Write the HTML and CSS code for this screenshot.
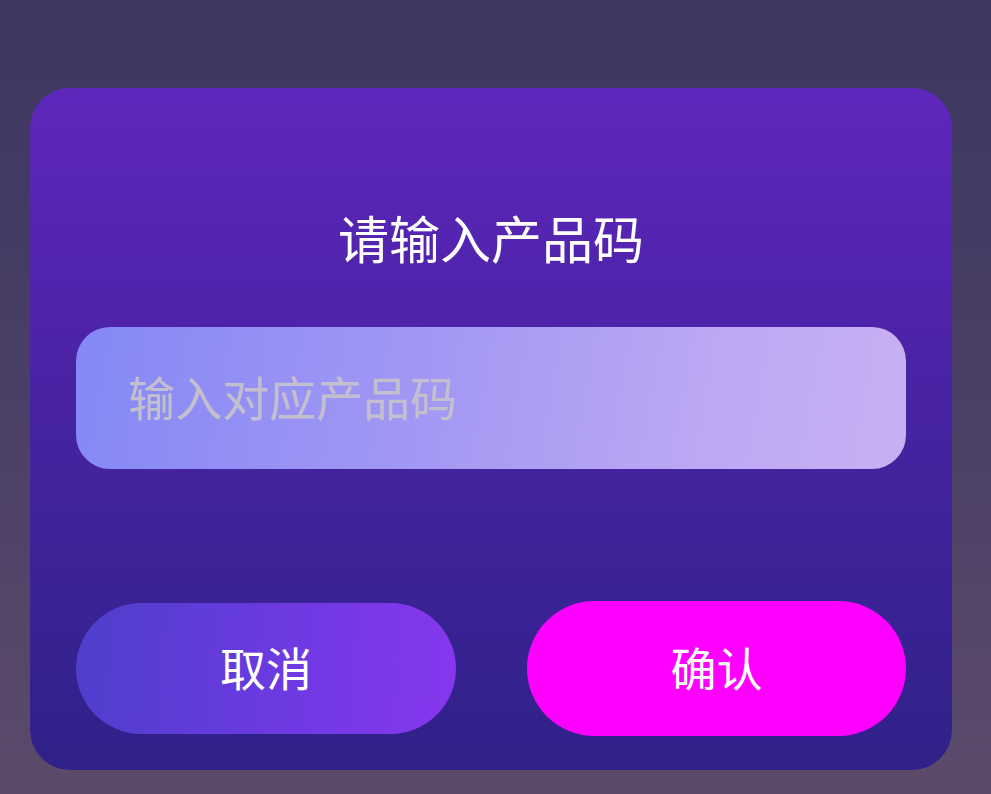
FILE: index.html
```html
<!DOCTYPE html>
<html lang="zh-CN">
<head>
<meta charset="utf-8">
<title>请输入产品码</title>
<link rel="stylesheet" href="styles.css">
</head>
<body>
<div class="screen">
  <div class="dialog">
    <h1 class="title">请输入产品码</h1>
    <div class="field"><input class="input" type="text" placeholder="输入对应产品码"></div>
    <div class="actions">
      <button class="btn btn-cancel">取消</button>
      <button class="btn btn-confirm">确认</button>
    </div>
  </div>
</div>
</body>
</html>
```
FILE: styles.css
```css
html, body {
  margin: 0;
  padding: 0;
  height: 100%;
}
body {
  font-family: "Noto Sans CJK SC", "Noto Sans", sans-serif;
  background: linear-gradient(180deg, #3c3761 0%, #4a3f66 50%, #5d4a6b 100%);
  overflow: hidden;
}
.screen {
  width: 991px;
  height: 794px;
  padding: 88px 39px 0 30px;
  box-sizing: border-box;
}
.dialog {
  width: 922px;
  height: 682px;
  box-sizing: border-box;
  border-radius: 40px;
  background: linear-gradient(180deg, #5f27bc 0%, #4a23a6 40%, #2f2188 100%);
  padding: 114px 46px 34px 46px;
  display: flex;
  flex-direction: column;
}
.title {
  margin: 0;
  height: 70px;
  line-height: 70px;
  text-align: center;
  color: #ffffff;
  font-size: 51px;
  font-weight: 400;
  letter-spacing: 0;
}
.field {
  margin-top: 55px;
  height: 142px;
}
.input {
  width: 100%;
  height: 100%;
  box-sizing: border-box;
  border: none;
  outline: none;
  border-radius: 34px;
  background: linear-gradient(100deg, #8488f6 0%, #a499f3 45%, #bca8f4 75%, #c8b0f2 100%);
  padding: 0 0 6px 52px;
  font-family: "Noto Sans CJK SC", "Noto Sans", sans-serif;
  font-size: 47px;
  color: #ffffff;
}
.input::placeholder {
  color: #c4bfcf;
  opacity: 1;
}
.actions {
  margin-top: auto;
  display: grid;
  grid-template-columns: 380px 379px;
  justify-content: space-between;
  align-items: center;
  height: 135px;
}
.btn {
  border: none;
  padding: 0 0 6px 0;
  color: #ffffff;
  font-family: "Noto Sans CJK SC", "Noto Sans", sans-serif;
  font-size: 46px;
  font-weight: 400;
  cursor: pointer;
}
.btn-cancel {
  height: 131px;
  border-radius: 66px;
  background: linear-gradient(95deg, #4e3fcb 0%, #6a3ae0 50%, #8737ee 100%);
}
.btn-confirm {
  height: 135px;
  border-radius: 68px;
  background: #ff00ff;
}
```
